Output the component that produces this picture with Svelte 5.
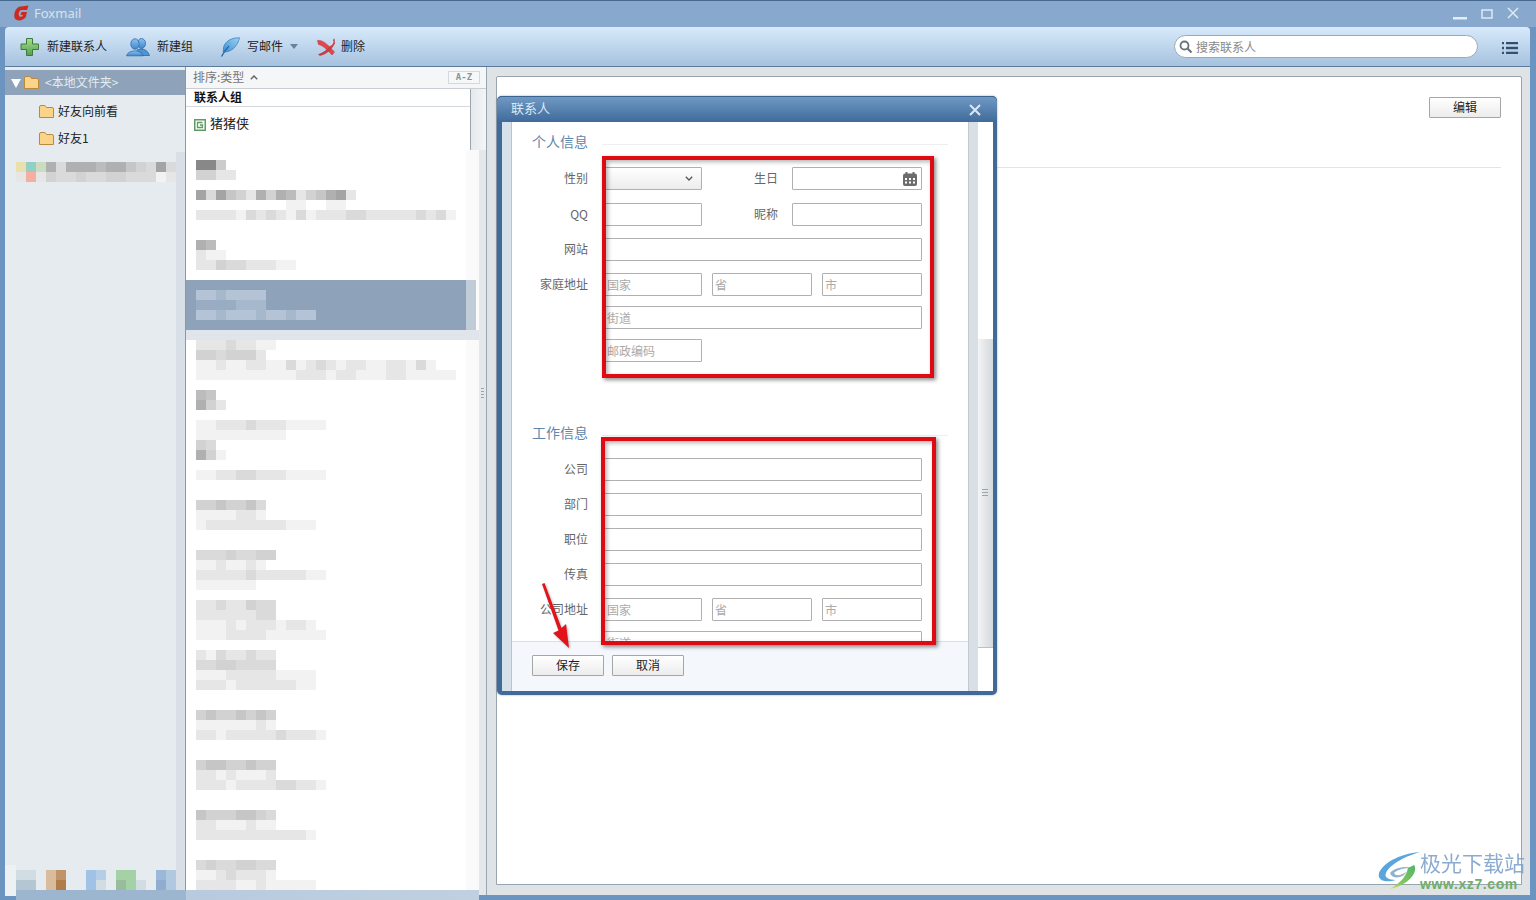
<script>
  const shades = { Y:'#ecdfae', T:'#93cfc4', G:'#cbdcc0', O:'#f5aea0', x:'#b4c4d6', y:'#a6b9cc', z:'#98adc3',
    N:'#d2dce3', M:'#b4c6d2', B:'#d8bc9c', C:'#c09468', K:'#b07c4c', L:'#9fc2e6', P:'#b4cee8', R:'#a4d2a6', S:'#98bc9c', U:'#9cb8d8', V:'#b0c8e0', W:'#8fadcf',
    h:'#f2f2f2', j:'#e6e6e6', k:'#dadada', m:'#d2d2d2', n:'#c6c6c6', p:'#bcbcbc', q:'#b0b0b0', r:'#a4a4a4' };
  const color = (c) => c === '.' ? 'transparent' : (shades[c] || `#${c}${c}${c}`);
  const cells = (s) => [...s].map(color);

  const sideTop = ['YTGqkqqqpqqnmkrk', 'jOjmkkmkkmmkkkhj'];
  const sideTopRows = sideTop.map(cells);
  const sideBottom = ['NN.BC..LP.RR..UV', 'MM.BK..LN.SRN.WV'];
  const sideBottomRows = sideBottom.map(cells);

  const data = {
    160:'88c', 170:'mmjj',
    190:'rkrnmjqmqpjmnqrj', 200:'.........hh..hh', 210:'jjjjhkjkjhkhjjjkkjjjjjkjkh',
    240:'qp', 250:'jhh', 260:'jjmkkjjjhh',
    290:'xxyxxxx', 300:'zzzzyyy', 310:'xxyxxxyxxyxx',
    340:'jjjkjjhh', 350:'mmkmmmj', 360:'hhjhhjjhhkhjkjhjjhhjjhkh', 370:'hhhhhhhhhhjjjhjjhhhjjhhhhh',
    390:'pn', 400:'qmj', 420:'hhjjjkjjjhhhh', 430:'hhhhhhhhh',
    440:'mk', 450:'qmh', 470:'hhjjkkjjjhhhh',
    500:'mmnmmnk', 510:'hhhhjjh', 520:'hjjjjjjjjhhh',
    550:'kkkmkkmm', 560:'hhjhhjh', 570:'jjjjjkjjjjjhh', 580:'hhhhhh',
    600:'jjkjjmkk', 610:'jjjjjjkk', 620:'hhhjhjjjhjjh', 630:'hhhjjjjhhhhhh',
    650:'jhkjjkjj', 660:'kkmmkkkk', 670:'hhhjjjjjhhhh', 680:'jjjhjjjjjjhh',
    710:'mnmmnmnm', 720:'hhhhhhjh', 730:'jjhjjjjjkjjjh',
    760:'mnnmmnmm', 770:'jjhjhhhj', 780:'jjjhjjjjkkjjh',
    810:'nmmmnnmk', 820:'jjhhhjhh', 830:'jjjjjjjjjjjh',
    860:'kmkkmmkk', 870:'hhjkjjjh', 880:'jjjjhhjhhhhh'
  };
  const lines = [];
  for (let y = 150; y < 890; y += 10) {
    lines.push({ y, cells: cells(data[y] || ''), sel: y >= 280 && y < 330, under: y === 330 });
  }

  const work = ['公司', '部门', '职位', '传真'];
</script>

<div class="win">
  <header class="title">
    <svg class="logo" viewBox="0 0 16 16" width="16" height="16">
      <path d="M15.500 .5 L14 5 L8 5 C5.500 6 5 10 6.500 11.500 C8 12.300 9.500 11.700 10 10 L7.500 10 L8.500 7 L14 7 L12.800 12 C10 16 4 16.500 1.800 13.500 C.2 10 2 4 6 1.800 Z" fill="#cf2a20"/>
    </svg>
    <span class="app">Foxmail</span>
    <span class="controls">
      <svg viewBox="0 0 70 20" width="70" height="20">
        <rect x="1" y="14" width="14" height="2.500" fill="#e4edf5"/>
        <rect x="30" y="7" width="10" height="8" fill="none" stroke="#dfe9f3" stroke-width="1.500"/>
        <path d="M56 5 L66 15 M66 5 L56 15" stroke="#dfe9f3" stroke-width="1.500" fill="none"/>
      </svg>
    </span>
  </header>

  <nav class="toolbar">
    <div class="tool t1">
      <svg viewBox="0 0 20 20" width="20" height="20">
        <defs>
          <linearGradient id="gp" x1="0" y1="0" x2="0" y2="1"><stop offset="0" stop-color="#a8dc8e"/><stop offset="1" stop-color="#4fa24a"/></linearGradient>
          <linearGradient id="gf" x1="1" y1="0" x2="0" y2="1"><stop offset="0" stop-color="#9ed2f4"/><stop offset="1" stop-color="#3f8fd0"/></linearGradient>
          <linearGradient id="gm" x1="0" y1="0" x2="0" y2="1"><stop offset="0" stop-color="#8fc2ec"/><stop offset="1" stop-color="#3f86cc"/></linearGradient>
        </defs>
        <path d="M6.500 1.500 H12.500 V7 H18.500 V12.500 H12.500 V18.500 H6.500 V12.500 H1 V7 H6.500 Z" fill="url(#gp)" stroke="#3f7a3c" stroke-width="1"/>
      </svg>
      <span>新建联系人</span>
    </div>
    <div class="tool t2">
      <svg viewBox="0 0 24 20" width="24" height="20">
        <ellipse cx="15.500" cy="6.500" rx="4" ry="5" fill="url(#gm)" stroke="#2a6cb0" stroke-width=".8"/>
        <path d="M11 13 C14 11.500 21 11 23.500 18.500 L14 18.500 Z" fill="#4f94d6" stroke="#2a6cb0" stroke-width=".8"/>
        <ellipse cx="9" cy="7" rx="4.200" ry="5.200" fill="url(#gm)" stroke="#2a6cb0" stroke-width=".8"/>
        <path d="M.5 18.800 C2 12.500 15 12 17.500 18.800 Z" fill="url(#gm)" stroke="#2a6cb0" stroke-width=".8"/>
      </svg>
      <span>新建组</span>
    </div>
    <div class="tool t3">
      <svg viewBox="0 0 20 20" width="20" height="20">
        <path d="M19.500 .8 C12 .5 5 4 3.500 10.500 L3.200 15 C10 15.500 17 11 19.500 .8 Z" fill="url(#gf)" stroke="#2c78b8" stroke-width=".7"/>
        <path d="M9 9 C6 12 3.500 15.500 1.500 19.500" fill="none" stroke="#1f6aa8" stroke-width="1.300"/>
      </svg>
      <span>写邮件</span>
      <i class="caret"></i>
    </div>
    <div class="tool t4">
      <svg viewBox="0 0 18 18" width="18" height="18">
        <path d="M.5 2.500 C6 1.500 11 7 17.500 14 L15 17 C10 11.500 6 7.500 1.500 6.500 Z" fill="#e2474c" stroke="#b03036" stroke-width=".5"/>
        <path d="M17 .8 C16 6 11 13 1.500 16.500 L3 17.500 C11 16 16 9 17.800 5 Z" fill="#cf3f44" stroke="#a82c30" stroke-width=".5"/>
        <path d="M15.500 3 L13 8 L15 7 L16.800 3.500 Z" fill="#e9e4e2"/>
      </svg>
      <span>删除</span>
    </div>
    <div class="search">
      <svg viewBox="0 0 14 14" width="14" height="14">
        <circle cx="5.500" cy="5.500" r="4" fill="none" stroke="#66727e" stroke-width="1.800"/>
        <path d="M8.500 8.500 L12.500 12.500" stroke="#66727e" stroke-width="2.200"/>
      </svg>
      <span>搜索联系人</span>
    </div>
    <svg class="menu" viewBox="0 0 16 12" width="16" height="12">
      <path d="M0 1 H2 M4 1 H16 M0 6 H2 M4 6 H16 M0 11 H2 M4 11 H16" stroke="#34506f" stroke-width="2.400"/>
    </svg>
  </nav>

  <main class="body">
    <aside class="side">
      <div class="side-head">
        <i class="tri"></i>
        <svg class="folder" viewBox="0 0 15 13" width="15" height="13"><path d="M.5 2 Q.5 .5 2 .5 H6 L7.500 2.500 H13 Q14.500 2.500 14.500 4 V12.500 H.5 Z" fill="#fbd48a" stroke="#b98a3e"/></svg>
        <span>&lt;本地文件夹&gt;</span>
      </div>
      <div class="side-item">
        <svg class="folder" viewBox="0 0 15 13" width="15" height="13"><path d="M.5 2 Q.5 .5 2 .5 H6 L7.500 2.500 H13 Q14.500 2.500 14.500 4 V12.500 H.5 Z" fill="#fbd48a" stroke="#b98a3e"/></svg>
        <span>好友向前看</span>
      </div>
      <div class="side-item">
        <svg class="folder" viewBox="0 0 15 13" width="15" height="13"><path d="M.5 2 Q.5 .5 2 .5 H6 L7.500 2.500 H13 Q14.500 2.500 14.500 4 V12.500 H.5 Z" fill="#fbd48a" stroke="#b98a3e"/></svg>
        <span>好友1</span>
      </div>
      <div class="side-rest">
        <div class="side-blur">
          {#each sideTopRows as row}
            <div class="mline">{#each row as c}<i style="background:{c}"></i>{/each}</div>
          {/each}
        </div>
        <div class="side-blur bottom">
          {#each sideBottomRows as row}
            <div class="mline">{#each row as c}<i style="background:{c}"></i>{/each}</div>
          {/each}
        </div>
      </div>
    </aside>

    <section class="list">
      <div class="list-head">
        <span>排序:类型</span>
        <svg viewBox="0 0 8 5" width="8" height="5"><path d="M.8 4.200 L4 1 L7.200 4.200" fill="none" stroke="#666" stroke-width="1.500"/></svg>
        <b class="az">A-Z</b>
      </div>
      <div class="group">
        <div class="group-main">
          <div class="group-title">联系人组</div>
          <div class="group-item">
            <svg viewBox="0 0 12 12" width="12" height="12">
              <rect x=".75" y=".75" width="10.500" height="10.500" fill="#fff" stroke="#5f9c5f" stroke-width="1.500"/>
              <path d="M8.500 3.500 H3.500 V8.500 H8.500 V6 H6" fill="none" stroke="#5f9c5f" stroke-width="1.300"/>
            </svg>
            <span>猪猪侠</span>
          </div>
        </div>
        <div class="group-gutter"></div>
      </div>
      <div class="lower">
        <div class="mosaic">
          {#each lines as l}
            <div class="mline row" class:sel={l.sel} class:under={l.under}>
              {#each l.cells as c}<i style="background:{c}"></i>{/each}
            </div>
          {/each}
        </div>
        <div class="splitter"><span></span></div>
      </div>
    </section>

    <section class="detail-wrap">
      <div class="detail">
        <div class="detail-top"><button class="btn">编辑</button></div>
      </div>
    </section>
  </main>

  <div class="strip"></div>

  <div class="dialog">
    <div class="dlg-title">
      <span>联系人</span>
      <svg viewBox="0 0 12 12" width="12" height="12"><path d="M1 1 L11 11 M11 1 L1 11" stroke="#dbe7f2" stroke-width="2"/></svg>
    </div>
    <div class="dlg-body">
      <div class="dlg-left"></div>
      <div class="dlg-main">
        <div class="form">
          <div class="sec first"><h3>个人信息</h3><i></i></div>
          <div class="frow r36">
            <label>性别</label>
            <div class="field select w98"><svg viewBox="0 0 8 5" width="8" height="5"><path d="M.8 .8 L4 4 L7.200 .8" fill="none" stroke="#555" stroke-width="1.300"/></svg></div>
            <label class="second">生日</label>
            <div class="field w130 date">
              <svg viewBox="0 0 14 14" width="14" height="14">
                <rect x="0" y="1.500" width="14" height="12.500" rx="2" fill="#6c6c6c"/>
                <rect x="2.500" y="0" width="2" height="3" fill="#6c6c6c"/><rect x="9.500" y="0" width="2" height="3" fill="#6c6c6c"/>
                <path d="M2 6 H4 V8 H2 Z M6 6 H8 V8 H6 Z M10 6 H12 V8 H10 Z M2 9.500 H4 V11.500 H2 Z M6 9.500 H8 V11.500 H6 Z M10 9.500 H12 V11.500 H10 Z" fill="#fff"/>
              </svg>
            </div>
          </div>
          <div class="frow r35">
            <label>QQ</label>
            <div class="field w98"></div>
            <label class="second">昵称</label>
            <div class="field w130"></div>
          </div>
          <div class="frow r35"><label>网站</label><div class="field full"></div></div>
          <div class="frow r33">
            <label>家庭地址</label>
            <div class="field w98 ph">国家</div>
            <div class="field w100 ph gap">省</div>
            <div class="field w100 ph gap">市</div>
          </div>
          <div class="frow r33"><label></label><div class="field full ph">街道</div></div>
          <div class="frow r33"><label></label><div class="field w98 ph">邮政编码</div></div>

          <div class="sec"><h3>工作信息</h3><i></i></div>
          {#each work as w}
            <div class="frow r35"><label>{w}</label><div class="field full"></div></div>
          {/each}
          <div class="frow r33">
            <label>公司地址</label>
            <div class="field w98 ph">国家</div>
            <div class="field w100 ph gap">省</div>
            <div class="field w100 ph gap">市</div>
          </div>
          <div class="frow r33"><label></label><div class="field full ph">街道</div></div>
        </div>
        <div class="dlg-foot">
          <button class="btn">保存</button>
          <button class="btn">取消</button>
        </div>
      </div>
      <div class="dlg-strip"></div>
      <div class="dlg-scroll"><div class="thumb"><span></span></div></div>
    </div>
  </div>

  <div class="redbox one"></div>
  <div class="redbox two"></div>
  <svg class="arrow" viewBox="0 0 40 75" width="40" height="75">
    <path d="M2 1 L4.500 0 L21.500 45 L26 41 L29 65 L13 50 L18.500 47.500 Z" fill="#e2141a" style="filter:drop-shadow(1px 1px 1px rgba(0,0,0,.3))"/>
  </svg>

  <div class="mark">
    <svg viewBox="0 0 44 42" width="44" height="42">
      <defs><linearGradient id="gw" x1="1" y1="0" x2="0" y2="1"><stop offset="0" stop-color="#4fb56a"/><stop offset=".7" stop-color="#8cc85c"/><stop offset="1" stop-color="#e8d85a"/></linearGradient></defs>
      <path d="M44 3 C28 4 8 12 3 24 C1 32 10 34 20 31 C12 31 8 28 10 24 C14 15 30 7 44 3 Z" fill="#5aa6dc"/>
      <path d="M14 24 C18 18 34 16 36 20 C32 18 22 20 18 24 C20 28 26 26 30 23 C28 29 16 31 14 24 Z" fill="#8fb4cc"/>
      <path d="M38 16 C42 21 36 35 14 40 C24 34 30 28 32 19 Z" fill="url(#gw)"/>
    </svg>
    <div class="mark-text">
      <div class="m1">极光下载站</div>
      <div class="m2">www.xz7.com</div>
    </div>
  </div>

  <div class="corner"></div>
</div>

<style>
  :global(body) { margin: 0; font-family: "Noto Sans CJK SC", "Liberation Sans", sans-serif; font-size: 12px; }
  .win { position: relative; width: 1536px; height: 900px; overflow: hidden; background: #6c94c0; display: flex; flex-direction: column; border-top: 1px solid #46698f; box-sizing: border-box; color: #222; }

  .title { height: 26px; background: #88a9cd; padding: 0 14px 0 13px; display: flex; align-items: center; flex: none; }
  .logo { margin-top: -2px; }
  .app { font-family: "Noto Sans", "Liberation Sans", sans-serif; font-size: 13px; color: #d8e2ec; margin-left: 5px; margin-top: -2px; }
  .controls { margin-left: auto; height: 20px; margin-top: -3px; }

  .toolbar { height: 39px; flex: none; margin: 0 6px 0 5px; background: linear-gradient(#d8eafb, #a6c2de); border-bottom: 1px solid #5c7a9a; border-radius: 4px 4px 0 0; display: flex; align-items: center; padding-left: 15px; position: relative; }
  .tool { display: flex; align-items: center; gap: 7px; line-height: 16px; color: #222; white-space: nowrap; }
  .tool span { padding-bottom: 2px; }
  .t2 { margin-left: 19px; }
  .t3 { margin-left: 27px; }
  .t4 { margin-left: 19px; gap: 6px; }
  .caret { width: 0; height: 0; border: 4px solid transparent; border-top: 5px solid #67829c; border-bottom: 0; }
  .search { position: absolute; left: 1169px; top: 8px; width: 304px; height: 23px; box-sizing: border-box; background: #fff; border: 1px solid #97a9bb; border-radius: 12px; display: flex; align-items: center; gap: 3px; padding-left: 4px; color: #888; }
  .search span { padding-bottom: 1px; }
  .menu { position: absolute; left: 1497px; top: 15px; }

  .body { flex: 1; min-height: 0; display: flex; margin: 0 6px 5px 5px; background: #dfe3e6; }

  .side { width: 181px; flex: none; background: #e6ebf0; display: flex; flex-direction: column; box-sizing: border-box; padding-top: 3px; }
  .side-head { height: 25px; background: #8ea3ba; display: flex; align-items: center; flex: none; padding-left: 6px; color: #e4eaf0; }
  .side-head span { padding-bottom: 2px; }
  .tri { width: 0; height: 0; border: 5px solid transparent; border-top: 9px solid #fff; border-bottom: 0; margin-top: 2px; }
  .side-head .folder { margin: 0 6px 0 3px; }
  .side-item { height: 27px; flex: none; display: flex; align-items: center; padding-left: 34px; gap: 4px; color: #222; }
  .side-item span { padding-bottom: 2px; }
  .side-item:nth-child(2) { margin-top: 3px; }
  .side-rest { flex: 1; min-height: 0; display: flex; flex-direction: column; justify-content: space-between; padding: 10px 0 5px 11px; background: linear-gradient(to right, transparent 171px, #d8dfe6 171px); }

  .mline { height: 10px; display: flex; }
  .mline i { width: 10px; height: 10px; flex: none; display: block; }

  .list { width: 302px; flex: none; background: #fff; border-right: 1px solid #9aa6b0; box-sizing: border-box; display: flex; flex-direction: column; border-left: 1px solid #8c98a4; margin-left: -1px; }
  .list-head { height: 22px; flex: none; box-sizing: border-box; background: #f4f6f8; border-bottom: 1px solid #c8ced4; display: flex; align-items: center; padding-left: 7px; gap: 6px; color: #777; position: relative; }
  .list-head span { padding-bottom: 2px; }
  .az { position: absolute; left: 262px; top: 4px; width: 32px; height: 13px; box-sizing: border-box; border: 1px solid #d4d9de; background: #f6f7f8; font: bold 9px/11px "DejaVu Sans Mono", monospace; color: #8a929a; text-align: center; }
  .group { height: 61px; flex: none; display: flex; }
  .group-main { width: 285px; box-sizing: border-box; border-right: 1px solid #9aa6b0; }
  .group-gutter { flex: 1; background: linear-gradient(to right, #e6e9ec, #f3f5f6); }
  .group-title { height: 18px; box-sizing: border-box; border-bottom: 1px solid #d4d9de; padding-left: 8px; font-weight: 700; line-height: 15px; color: #111; }
  .group-item { display: flex; align-items: center; gap: 4px; padding: 9px 0 0 8px; font-size: 13px; line-height: 14px; color: #222; }
  .group-item span { padding-bottom: 3px; }

  .lower { flex: 1; min-height: 0; display: flex; }
  .mosaic { width: 293px; flex: none; background: linear-gradient(to right, #fff 280px, #fafafb 280px); overflow: hidden; }
  .row { padding-left: 10px; }
  .row.sel { background: linear-gradient(to right, #8ea3ba 280px, #c0ccd8 280px, #c0ccd8 290px, transparent 290px); }
  .row.under { background: #dfe5eb; }
  .splitter { flex: 1; background: #e4e8eb; position: relative; }
  .splitter span { position: absolute; left: 0; right: 0; top: 238px; height: 10px; background: repeating-linear-gradient(#9aa4ac 0 1px, transparent 1px 3px); margin: 0 2px; }

  .detail-wrap { flex: 1; min-width: 0; padding: 9px 8px 10px 9px; display: flex; }
  .detail { flex: 1; background: #fff; border: 1px solid #98a4b0; border-radius: 2px 2px 0 0; }
  .detail-top { height: 91px; border-bottom: 1px solid #e4e4e4; margin-right: 20px; display: flex; justify-content: flex-end; align-items: flex-start; padding-top: 20px; box-sizing: border-box; }

  .btn { width: 72px; height: 21px; box-sizing: border-box; padding: 0 0 2px; border: 1px solid #a6a6a6; border-radius: 1px; background: linear-gradient(#fff, #ececec); font: 12px/16px "Noto Sans CJK SC", sans-serif; color: #222; }

  .strip { position: absolute; left: 16px; top: 889px; width: 463px; height: 10px; background: linear-gradient(to right, #9cb6d0 170px, #b8cade 170px, #c0d0e0); }
  .corner { position: absolute; left: 5px; top: 864px; width: 11px; height: 31px; background: #eef1f4; }

  .dialog { position: absolute; left: 497px; top: 95px; width: 500px; height: 599px; box-sizing: border-box; background: #3f6a9a; border-radius: 5px; display: flex; flex-direction: column; padding: 0 4px 4px 5px; box-shadow: 0 0 2px rgba(40,60,90,.5); }
  .dlg-title { height: 26px; flex: none; margin: 0 -4px 0 -5px; padding: 0 16px 4px 14px; border-radius: 5px 5px 0 0; background: linear-gradient(#7099c4, #3f6a9a); border-top: 1px solid #3a6390; box-sizing: border-box; color: #dbe7f2; display: flex; align-items: center; justify-content: space-between; font-size: 13px; }
  .dlg-title svg { margin-top: 4px; }
  .dlg-body { flex: 1; min-height: 0; display: flex; background: #fff; }
  .dlg-left { width: 9px; flex: none; background: #d6e1ea; border-right: 1px solid #b8c4cc; }
  .dlg-main { width: 456px; flex: none; display: flex; flex-direction: column; background: #fff; }
  .dlg-strip { width: 10px; flex: none; background: #d8e0e6; border-left: 1px solid #c0c8d0; box-sizing: border-box; }
  .dlg-scroll { width: 15px; flex: none; background: #fff; }
  .thumb { margin-top: 217px; height: 308px; position: relative; background: linear-gradient(to right, #f2f4f6, #d4d8dc); border-bottom: 1px solid #b8c0c8; }
  .thumb span { position: absolute; left: 4px; width: 6px; top: 150px; height: 7px; background: repeating-linear-gradient(#9aa4ac 0 1px, transparent 1px 3px); }

  .form { flex: 1; min-height: 0; overflow: hidden; }
  .sec { height: 20px; display: flex; align-items: flex-start; margin: 61px 0 15px 20px; }
  .sec.first { margin-top: 10px; }
  .sec h3 { margin: 0; font-weight: 400; font-size: 14px; line-height: 18px; width: 56px; white-space: nowrap; color: #5f86ac; }
  .sec i { display: block; height: 1px; background: #eee; width: 346px; margin: 12px 0 0 14px; }
  .frow { height: 23px; display: flex; align-items: center; }
  .r36 { margin-bottom: 13px; }
  .r35 { margin-bottom: 12px; }
  .r33 { margin-bottom: 10px; }
  label { width: 76px; flex: none; text-align: right; color: #666; margin-right: 16px; white-space: nowrap; padding-bottom: 2px; }
  label.second { margin-right: 14px; }
  .field { height: 23px; box-sizing: border-box; border: 1px solid #b0b0b0; border-radius: 1px; background: #fff; flex: none; display: flex; align-items: center; }
  .w98 { width: 98px; }
  .w100 { width: 100px; }
  .w130 { width: 130px; }
  .full { width: 318px; }
  .gap { margin-left: 10px; }
  .ph { color: #aaa; padding-left: 2px; line-height: 21px; }
  .select { background: linear-gradient(#fff, #ececec); justify-content: flex-end; padding-right: 8px; }
  .date { justify-content: flex-end; padding-right: 4px; }

  .dlg-foot { height: 50px; flex: none; box-sizing: border-box; border-top: 1px solid #d8dfe5; background: #f4f8fc; padding: 13px 0 0 20px; display: flex; gap: 8px; align-items: flex-start; }

  .redbox { position: absolute; box-sizing: border-box; border: 4px solid #e00a12; box-shadow: 2px 2px 4px rgba(0,0,0,.45), inset 2px 2px 4px rgba(0,0,0,.3); }
  .redbox.one { left: 602px; top: 155px; width: 332px; height: 222px; }
  .redbox.two { left: 601px; top: 436px; width: 335px; height: 208px; }
  .arrow { position: absolute; left: 540px; top: 582px; }

  .mark { position: absolute; left: 1376px; top: 848px; display: flex; align-items: flex-start; width: 160px; }
  .mark-text { flex: none; line-height: 1; white-space: nowrap; }
  .m1 { font-size: 21px; line-height: 26px; color: #7fa4cc; opacity: .9; }
  .m2 { font: bold 14px/16px "Liberation Sans", sans-serif; color: #6fae6a; letter-spacing: .6px; margin-top: 1px; }
</style>
